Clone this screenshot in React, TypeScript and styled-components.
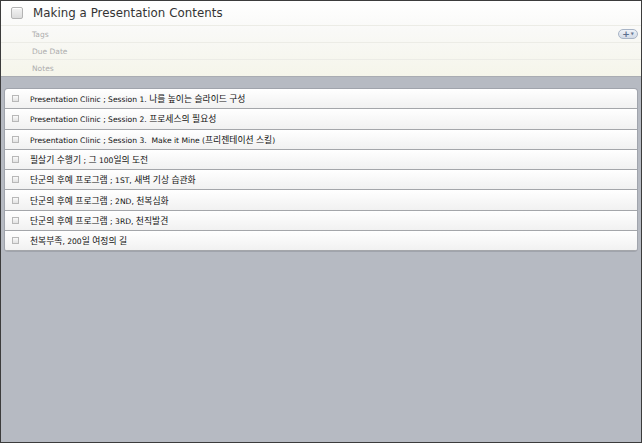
import React from "react";
import styled, { createGlobalStyle } from "styled-components";

const GlobalStyle = createGlobalStyle`
  html, body { margin: 0; padding: 0; background: #b6bac2; }
  * { box-sizing: border-box; }
`;

const FONT = `"DejaVu Sans", "Noto Sans CJK KR", sans-serif`;
const KFONT = `"Noto Sans CJK KR", "DejaVu Sans", sans-serif`;

const Window = styled.div`
  width: 642px;
  height: 443px;
  border: 1px solid #3c3c3c;
  background: #b6bac2;
  display: flex;
  flex-direction: column;
  overflow: hidden;
  font-family: ${FONT};
`;

const Header = styled.div`
  background: linear-gradient(#ffffff 0%, #f9f9f7 40%, #f5f5ea 100%);
  border-bottom: 1px solid #a9acb2;
  display: flex;
  flex-direction: column;
`;

const TitleRow = styled.div`
  height: 24px;
  display: flex;
  align-items: center;
  padding-left: 10px;
  gap: 10px;
`;

const BigCheck = styled.span`
  width: 12px;
  height: 12px;
  border: 1px solid #b4b4b4;
  border-radius: 2px;
  background: linear-gradient(#f4f4f4, #dcdcdc);
  box-shadow: inset 0 1px 0 #fff;
`;

const Title = styled.div`
  font-size: 11.8px;
  color: #333;
  letter-spacing: 0.05px;
`;

const FieldRow = styled.div<{ $h: number }>`
  height: ${(p) => p.$h}px;
  border-top: 1px solid #ecece6;
  display: flex;
  align-items: center;
  padding-left: 31px;
  padding-right: 3px;
  font-size: 7.5px;
  color: #adadad;
`;

const Label = styled.span`
  flex: 1;
`;

const AddButton = styled.span`
  width: 20px;
  height: 10px;
  border: 1px solid #a8b4c6;
  border-radius: 5px;
  background: linear-gradient(#eef2f8, #d2dae6);
  display: flex;
  align-items: center;
  justify-content: center;
  gap: 1px;
  color: #5a6e8e;
  font-size: 9px;
  font-weight: bold;
  line-height: 1;
`;

const Caret = styled.span`
  font-size: 4px;
  color: #6a7a94;
`;

const ListArea = styled.div`
  padding: 12px 4px 0 4px;
`;

const List = styled.div`
  border-radius: 3px;
  overflow: hidden;
  box-shadow: 0 0 0 1px rgba(120, 124, 132, 0.35);
`;

const Row = styled.div`
  height: 20.3px;
  border-bottom: 1px solid #a4a6aa;
  background: linear-gradient(#ffffff, #f1f1f1);
  display: flex;
  align-items: center;
  padding-left: 7px;
  gap: 11px;
`;

const SmallCheck = styled.span`
  width: 7px;
  height: 7px;
  border: 1px solid #b8b8b8;
  background: linear-gradient(#fafafa, #e2e2e2);
  flex: none;
`;

const RowText = styled.span`
  font-size: 7.6px;
  color: #111;
  white-space: pre;
`;

const Ko = styled.span`
  font-family: ${KFONT};
  font-size: 8.8px;
`;

const items = [
  "Presentation Clinic ; Session 1. 나를 높이는 슬라이드 구성",
  "Presentation Clinic ; Session 2. 프로세스의 필요성",
  "Presentation Clinic ; Session 3.  Make it Mine (프리젠테이션 스킬)",
  "필살기 수행기 ; 그 100일의 도전",
  "단군의 후예 프로그램 ; 1ST, 새벽 기상 습관화",
  "단군의 후예 프로그램 ; 2ND, 천복심화",
  "단군의 후예 프로그램 ; 3RD, 천직발견",
  "천복부족, 200일 여정의 길",
];

function renderText(t: string) {
  const parts = t.split(/([\uac00-\ud7af]+)/);
  return parts.map((p, i) =>
    /[\uac00-\ud7af]/.test(p) ? <Ko key={i}>{p}</Ko> : <React.Fragment key={i}>{p}</React.Fragment>
  );
}

export default function App() {
  return (
    <>
      <GlobalStyle />
      <Window>
        <Header>
          <TitleRow>
            <BigCheck />
            <Title>Making a Presentation Contents</Title>
          </TitleRow>
          <FieldRow $h={17}>
            <Label>Tags</Label>
            <AddButton>
              +<Caret>▼</Caret>
            </AddButton>
          </FieldRow>
          <FieldRow $h={17}>
            <Label>Due Date</Label>
          </FieldRow>
          <FieldRow $h={17}>
            <Label>Notes</Label>
          </FieldRow>
        </Header>
        <ListArea>
          <List>
            {items.map((t) => (
              <Row key={t}>
                <SmallCheck />
                <RowText>{renderText(t)}</RowText>
              </Row>
            ))}
          </List>
        </ListArea>
      </Window>
    </>
  );
}
